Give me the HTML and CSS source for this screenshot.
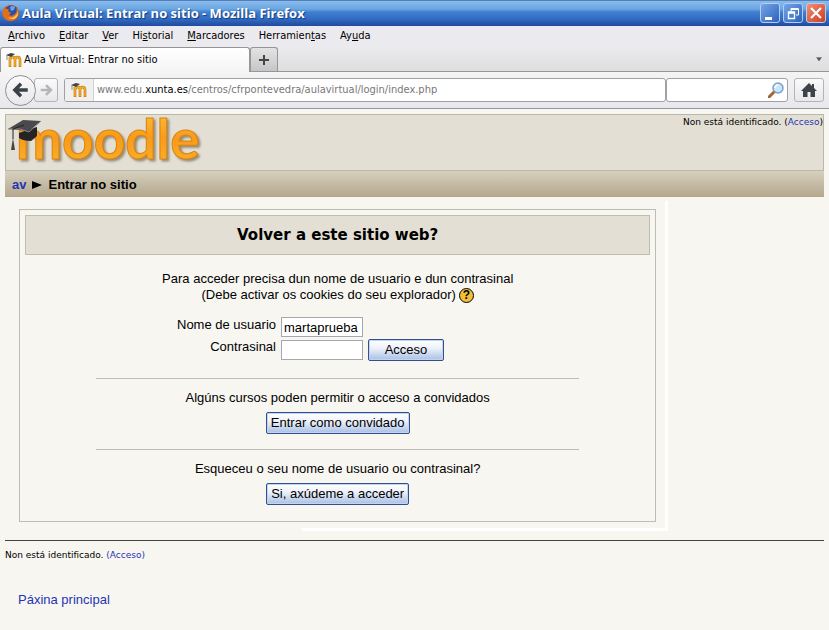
FILE: index.html
```html
<!DOCTYPE html>
<html lang="gl">

<head>
    <meta charset="UTF-8">
    <meta name="viewport" content="width=device-width, initial-scale=1.0">
    <title>Aula Virtual: Entrar no sitio</title>
    <link rel="stylesheet" href="styles.css">
</head>

<body>
    <!-- shared icons -->
    <svg class="defs" width="0" height="0" aria-hidden="true">
        <defs>
            <linearGradient id="gold" x1="0" y1="0" x2="0" y2="1">
                <stop offset="0" stop-color="#ffc53a" />
                <stop offset="0.5" stop-color="#f99a1b" />
                <stop offset="1" stop-color="#fbb52c" />
            </linearGradient>
            <symbol id="moodle-m" viewBox="0 0 16 16">
                <path d="M4 15V5M4 8q0-3 2.500-3T9 8v7M9 8q0-3 2.500-3T14 8v7" fill="none" stroke="#b8760c" stroke-width="2.6" />
                <path d="M4 14.500V5M4 8q0-3 2.500-3T9 8v6.500M9 8q0-3 2.500-3T14 8v6.500" fill="none" stroke="#f5ae23" stroke-width="1.5" />
                <path d="M0 3l5-2 4 1-4 3z" fill="#444" />
                <path d="M1 3v5" stroke="#777" stroke-width="0.8" />
            </symbol>
        </defs>
    </svg>

    <header class="titlebar">
        <svg class="fox" viewBox="0 0 18 18" width="18" height="18">
            <circle cx="9" cy="9" r="8" fill="#c9481b" />
            <circle cx="9.5" cy="7.5" r="6" fill="#2a4fa3" />
            <path d="M8 3q3-2 5 0l-1 3-3 1z" fill="#6fa5df" />
            <path d="M2 3l2 2 3 0-1 2 3 2-2 2q3 2 6-1 3-3 1-7 4 4 2 9-3 5-8 5-7-1-8-8z" fill="#e0701c" />
            <path d="M14 4q3 5-1 8-3 3-7 1 4 4 8 1t0-10z" fill="#ffc34d" />
        </svg>
        <h1>Aula Virtual: Entrar no sitio - Mozilla Firefox</h1>
        <div class="win-btns">
            <button type="button" aria-label="Minimizar">
                <svg viewBox="0 0 18 18" width="18" height="18"><path d="M4 13h7v3H4z" fill="#fff" /></svg>
            </button>
            <button type="button" aria-label="Restaurar">
                <svg viewBox="0 0 18 18" width="18" height="18"><path d="M7 8V4.500h7.500V11H12M7 5.500h7" fill="none" stroke="#fff" /><path d="M4.500 8h6v6.500h-6zM4 9h7" fill="none" stroke="#fff" stroke-width="1.400" /></svg>
            </button>
            <button type="button" class="close" aria-label="Pechar">
                <svg viewBox="0 0 18 18" width="18" height="18"><path d="M4 4l10 10M14 4L4 14" stroke="#fff" stroke-width="2.200" /></svg>
            </button>
        </div>
    </header>

    <nav class="menubar">
        <a href="#"><u>A</u>rchivo</a>
        <a href="#"><u>E</u>ditar</a>
        <a href="#"><u>V</u>er</a>
        <a href="#">Hi<u>s</u>torial</a>
        <a href="#"><u>M</u>arcadores</a>
        <a href="#">Herramien<u>t</u>as</a>
        <a href="#">Ay<u>u</u>da</a>
    </nav>

    <div class="tabs">
        <button type="button" class="tab active">
            <svg width="16" height="16"><use href="#moodle-m" /></svg>
            <span>Aula Virtual: Entrar no sitio</span>
        </button>
        <button type="button" class="tab new" aria-label="Nova lapela">
            <svg viewBox="0 0 12 12" width="12" height="12"><path d="M6 1v10M1 6h10" stroke="#444" stroke-width="2" /></svg>
        </button>
        <button type="button" class="tab-list" aria-label="Lista de lapelas">
            <svg viewBox="0 0 6 4" width="6" height="4"><path d="M0 .500h6M1 1h4L3 4z" fill="#555" stroke="#555" stroke-width=".500" /></svg>
        </button>
    </div>

    <div class="toolbar">
        <div class="history">
            <button type="button" class="back" aria-label="Atrás">
                <svg viewBox="0 0 16 16" width="18" height="18"><path d="M14 8H3M8 2.500L2.500 8 8 13.500" fill="none" stroke="#3a4147" stroke-width="3" /></svg>
            </button>
            <button type="button" class="forward" aria-label="Adiante">
                <svg viewBox="0 0 16 16" width="14" height="14"><path d="M2 8h11M8 2.500L13.500 8 8 13.500" fill="none" stroke="#b3b6b9" stroke-width="3" /></svg>
            </button>
        </div>
        <div class="address">
            <span class="site"><svg width="16" height="16"><use href="#moodle-m" /></svg></span>
            <span class="url">www.edu.<b>xunta.es</b>/centros/cfrpontevedra/aulavirtual/login/index.php</span>
        </div>
        <div class="search">
            <input type="text" aria-label="Buscar">
            <svg viewBox="0 0 16 16" width="16" height="16">
                <path d="M1 15l5-5" stroke="#a5652e" stroke-width="3" stroke-linecap="round" />
                <circle cx="10" cy="6" r="5" fill="#c6e6fb" stroke="#7b9fc8" stroke-width="1.500" />
                <path d="M7 6q0-3 3-3" fill="none" stroke="#fff" stroke-width="1.500" />
            </svg>
        </div>
        <button type="button" class="home" aria-label="Inicio">
            <svg viewBox="0 0 16 14" width="16" height="14"><path d="M8 0l3 3V1h2v4l3 3h-2v6H9.500V9h-3v5H2V8H0z" fill="#3d4348" /></svg>
        </button>
    </div>

    <div class="page">
        <div class="header">
            <svg class="logo" viewBox="0 0 204 54" width="204" height="54" role="img" aria-label="moodle">
                <text class="logo-text" x="8" y="43">moodle</text>
                <!-- mortarboard -->
                <path d="M11 17l11-4 7-2 0 9-6 5q-8 0-12-3z" fill="#242426" />
                <path d="M0 13l15-9 18 1-12 10z" fill="#4a4a4c" />
                <path d="M0 13l12 0 9 3 12-11" fill="none" stroke="#8a8a8a" />
                <path d="M16 9L5 13v10" fill="none" stroke="#222" />
                <path d="M5 22l-2 12h4z" fill="#444" />
            </svg>
            <div class="login-info">Non está identificado. (<a href="#">Acceso</a>)</div>
        </div>
        <div class="breadcrumb">
            <a href="#">av</a>
            <svg viewBox="0 0 10 8" width="10" height="8"><path d="M0 0l10 4-10 4z" /></svg>
            <span>Entrar no sitio</span>
        </div>

        <div class="content">
            <main class="login-box">
                <h2>Volver a este sitio web?</h2>

                <div class="section">
                    <p>Para acceder precisa dun nome de usuario e dun contrasinal</p>
                    <p class="cookies">(Debe activar os cookies do seu explorador)
                        <button type="button" class="help" aria-label="Axuda">?</button>
                    </p>
                    <form class="login-form">
                        <label for="username">Nome de usuario</label>
                        <input type="text" id="username" value="martaprueba">
                        <label for="password">Contrasinal</label>
                        <input type="password" id="password">
                        <button type="submit" class="btn">Acceso</button>
                    </form>
                </div>

                <div class="section">
                    <p>Algúns cursos poden permitir o acceso a convidados</p>
                    <button type="button" class="btn">Entrar como convidado</button>
                </div>

                <div class="section">
                    <p>Esqueceu o seu nome de usuario ou contrasinal?</p>
                    <button type="button" class="btn">Si, axúdeme a acceder</button>
                </div>
            </main>
        </div>

        <footer class="footer">
            <div class="login-info">Non está identificado. <a href="#">(Acceso)</a></div>
            <a class="home-link" href="#">Páxina principal</a>
        </footer>
    </div>
</body>

</html>
```
FILE: styles.css
```css
* {
    box-sizing: border-box;
    margin: 0;
    padding: 0;
}

body {
    min-height: 100vh;
    font: 13px/16px "Liberation Sans", Arial, sans-serif;
    color: #000;
    background-color: #f7f6f1;
}

button,
input {
    font: inherit;
    color: inherit;
}

a {
    color: #1f35b5;
    text-decoration: none;
}

svg {
    display: block;
    flex: none;
}

.defs {
    position: absolute;
}

/* window */
.titlebar {
    display: flex;
    align-items: center;
    gap: 2px;
    height: 26px;
    padding: 0 3px 0 2px;
    background: linear-gradient(#12459a 0, #8bbbea 1px, #6aa7e3 9px, #3f7fd0 12px, #3470c5 18px, #2149a0 26px);
}

.titlebar h1 {
    flex: 1;
    font: bold 13px/18px "Open Sans", sans-serif;
    color: #fff;
    text-shadow: 1px 1px 1px #173a80;
}

.win-btns {
    display: flex;
    gap: 3px;
}

.win-btns button {
    width: 20px;
    height: 20px;
    border: 1px solid #b5cdf0;
    border-radius: 3px;
    background: linear-gradient(135deg, #76a5e6, #2b62bd);
}

.win-btns .close {
    background: linear-gradient(135deg, #ee9076, #cf3c1c);
}

.menubar,
.tabs,
.toolbar {
    font: 11px/14px "DejaVu Sans Condensed", "DejaVu Sans", Tahoma, sans-serif;
}

.menubar {
    display: flex;
    gap: 14px;
    height: 21px;
    padding: 3px 8px;
    background-color: #ebeaee;
}

.menubar a {
    color: #000;
}

.tabs {
    display: flex;
    height: 25px;
    border-bottom: 1px solid #969696;
    background: linear-gradient(#ebeaee, #dededf);
}

.tab {
    display: flex;
    align-items: center;
    gap: 2px;
    border: 1px solid #969696;
    border-bottom: none;
    border-radius: 3px 3px 0 0;
}

.tab.active {
    width: 250px;
    height: 25px;
    padding: 0 5px;
    background: linear-gradient(#fff, #f4f4f5);
}

.tab.new {
    justify-content: center;
    width: 28px;
    background: linear-gradient(#e3e3e4, #c6c6c8);
}

.tab-list {
    margin-left: auto;
    padding: 0 7px;
    border: none;
    background: none;
}

.toolbar {
    display: flex;
    align-items: center;
    height: 37px;
    padding: 0 5px;
    border-bottom: 1px solid #96969c;
    background: linear-gradient(#f4f4f5, #e8e8ec);
}

.history {
    display: flex;
    align-items: center;
    margin-right: 6px;
}

.back,
.forward,
.home {
    display: flex;
    align-items: center;
    justify-content: center;
    border: 1px solid #b4b4b8;
    border-radius: 3px;
    background: linear-gradient(#fafafa, #e8e8ea);
}

.back {
    z-index: 1;
    width: 31px;
    height: 31px;
    border-color: #8f8f93;
    border-radius: 50%;
}

.forward {
    width: 24px;
    height: 24px;
    margin-left: -2px;
}

.address,
.search {
    display: flex;
    align-items: center;
    height: 24px;
    border: 1px solid #a0a0a5;
    border-radius: 3px;
    background-color: #fff;
}

.address {
    flex: 1;
    overflow: hidden;
}

.site {
    display: flex;
    align-items: center;
    justify-content: center;
    width: 29px;
    height: 22px;
    border-right: 1px solid #d0d0d3;
    background-color: #f0f0f1;
}

.url {
    padding-left: 3px;
    color: #777;
}

.url b {
    font-weight: normal;
    color: #000;
}

.search {
    width: 122px;
    padding: 0 3px;
}

.search input {
    flex: 1;
    min-width: 0;
    border: none;
    outline: none;
}

.home {
    width: 30px;
    height: 24px;
    margin-left: 6px;
}

/* page */
.page {
    padding: 5px;
}

.header {
    display: flex;
    justify-content: space-between;
    height: 57px;
    border: 1px solid #bab8a6;
    background-color: #e3dfd4;
}

.logo {
    margin: 1px 0 0 2px;
    overflow: visible;
}

.logo-text {
    font: bold 55px Lato, sans-serif;
    fill: url(#gold);
    stroke: #d98510;
    filter: drop-shadow(2px 2px 1px #978b78);
}

.login-info {
    font: 9px/14px "DejaVu Sans", Verdana, sans-serif;
}

.breadcrumb {
    display: flex;
    align-items: center;
    gap: 6px;
    height: 26px;
    padding: 1px 7px 0;
    font-weight: bold;
    background: linear-gradient(#d6d0be, #b4a78c);
}

.content {
    width: 81%;
    margin-top: 4px;
    padding: 8px 9px 6px 14px;
    border-right: 3px solid #fff;
    border-bottom: 3px solid;
    border-image: linear-gradient(90deg, transparent 45%, #fff 45%) 3;
}

.login-box {
    padding: 5px 5px 1px;
    border: 1px solid #bebdb2;
    text-align: center;
}

.login-box h2 {
    padding: 10px 10px 9px;
    border: 1px solid #bebdb2;
    font: bold 15px/19px "DejaVu Sans", Verdana, sans-serif;
    background-color: #e3dfd4;
}

.section {
    margin: 0 71px;
    padding: 11px 0 15px;
}

.section + .section {
    border-top: 1px solid #bebdb2;
}

h2 + .section {
    padding: 16px 0 17px;
}

.section > .btn {
    margin-top: 6px;
}

.cookies {
    display: flex;
    align-items: center;
    justify-content: center;
    gap: 3px;
}

.help {
    width: 15px;
    height: 15px;
    border: 1px solid #000;
    border-radius: 50%;
    font-size: 12px;
    font-weight: bold;
    line-height: 13px;
    background-color: #f3bf3a;
}

.login-form {
    display: grid;
    grid-template-columns: 180px 82px auto;
    justify-content: start;
    column-gap: 5px;
    row-gap: 2px;
    margin-top: 14px;
}

.login-form label {
    grid-column: 1;
    text-align: right;
}

.login-form input {
    align-self: center;
    width: 82px;
    height: 20px;
    padding: 0 2px;
    border: 1px solid #a5a9ad;
    background-color: #fff;
}

.login-form .btn {
    width: 76px;
}

.btn {
    height: 22px;
    padding: 0 4px;
    border: 1px solid #30508f;
    border-radius: 2px;
    background: linear-gradient(#fff, #eef2f9 40%, #a9bfe4);
    box-shadow: inset 0 0 0 1px #c5d3ec;
}

.footer {
    margin-top: 9px;
    padding-top: 7px;
    border-top: 1px solid #444;
}

.home-link {
    display: inline-block;
    margin: 30px 13px 0;
}
```
